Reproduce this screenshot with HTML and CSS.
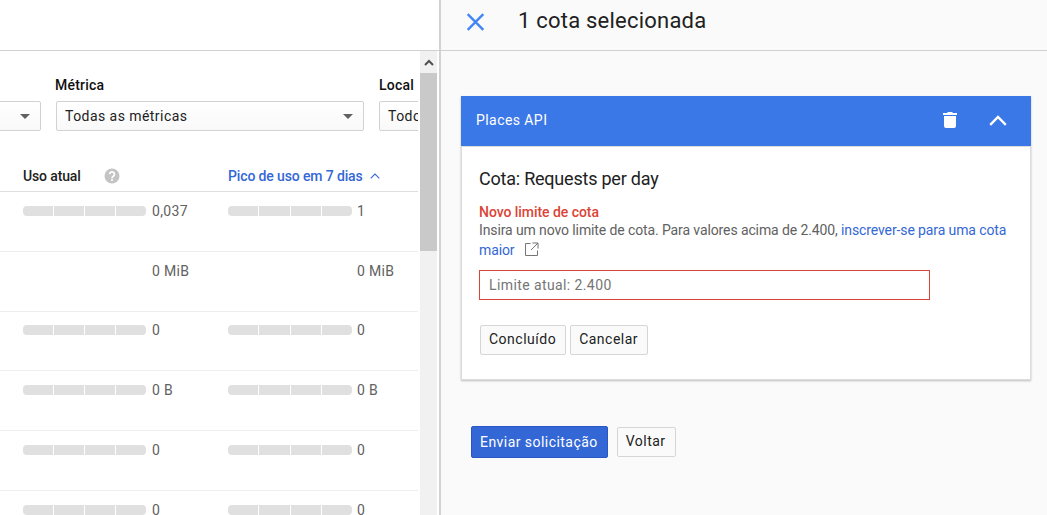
FILE: index.html
```html
<!DOCTYPE html>
<html lang="pt-BR">
<head>
<meta charset="utf-8">
<title>Cotas</title>
<link rel="stylesheet" href="styles.css">
</head>
<body>
<div class="app">
  <section class="left">
    <div class="left-top"></div>
    <div class="left-body">
      <div class="pane">
        <div class="filters">
          <div class="filter f-first">
            <div class="label">&nbsp;</div>
            <div class="select"><span class="sel-text"></span><i class="caret"></i></div>
          </div>
          <div class="filter f-metric">
            <div class="label">Métrica</div>
            <div class="select"><span class="sel-text">Todas as métricas</span><i class="caret"></i></div>
          </div>
          <div class="filter f-local">
            <div class="label">Local</div>
            <div class="select"><span class="sel-text">Todos</span></div>
          </div>
        </div>
        <div class="thead">
          <div class="cell th">Uso atual
            <svg class="help" viewBox="0 0 16 16" width="16" height="16"><circle cx="8" cy="8" r="7.5" fill="#c4c4c4"/><path d="M5.6 6.2a2.4 2.3 0 1 1 3.7 2c-.9.6-1.3 1-1.3 2" fill="none" stroke="#fff" stroke-width="1.7"/><rect x="7.1" y="11" width="1.8" height="1.8" fill="#fff"/></svg>
          </div>
          <div class="cell th th-sort">Pico de uso em 7 dias
            <svg class="sort" viewBox="0 0 10 6" width="10" height="6"><path d="M.7 5.3 5 1l4.3 4.3" fill="none" stroke="#3367d6" stroke-width="1.1"/></svg>
          </div>
        </div>
        <div class="row">
          <div class="cell"><div class="bar"><i></i><i></i><i></i><i></i></div><span class="val">0,037</span></div>
          <div class="cell"><div class="bar b2"><i></i><i></i><i></i><i></i></div><span class="val">1</span></div>
        </div>
        <div class="row">
          <div class="cell"><div class="bar none"></div><span class="val">0 MiB</span></div>
          <div class="cell"><div class="bar b2 none"></div><span class="val">0 MiB</span></div>
        </div>
        <div class="row">
          <div class="cell"><div class="bar"><i></i><i></i><i></i><i></i></div><span class="val">0</span></div>
          <div class="cell"><div class="bar b2"><i></i><i></i><i></i><i></i></div><span class="val">0</span></div>
        </div>
        <div class="row">
          <div class="cell"><div class="bar"><i></i><i></i><i></i><i></i></div><span class="val">0 B</span></div>
          <div class="cell"><div class="bar b2"><i></i><i></i><i></i><i></i></div><span class="val">0 B</span></div>
        </div>
        <div class="row">
          <div class="cell"><div class="bar"><i></i><i></i><i></i><i></i></div><span class="val">0</span></div>
          <div class="cell"><div class="bar b2"><i></i><i></i><i></i><i></i></div><span class="val">0</span></div>
        </div>
        <div class="row">
          <div class="cell"><div class="bar"><i></i><i></i><i></i><i></i></div><span class="val">0</span></div>
          <div class="cell"><div class="bar b2"><i></i><i></i><i></i><i></i></div><span class="val">0</span></div>
        </div>
      </div>
      <div class="scrollbar">
        <div class="sb-btn"><svg viewBox="0 0 10 7" width="10" height="7"><path d="M1 6l4-4 4 4" fill="none" stroke="#505050" stroke-width="2"/></svg></div>
        <div class="sb-thumb"></div>
      </div>
    </div>
  </section>
  <section class="right">
    <header class="right-top">
      <svg class="close" viewBox="0 0 18 18" width="19" height="18"><path d="M1.2 1.2l15.6 15.6M16.8 1.2 1.2 16.8" fill="none" stroke="#4285f4" stroke-width="2.4"/></svg>
      <h1 class="title">1 cota selecionada</h1>
    </header>
    <div class="right-body">
      <div class="card">
        <div class="card-head">
          <span class="card-name">Places API</span>
          <svg class="trash" viewBox="0 0 14 16" width="14" height="16"><path d="M5 0h4l1 1h4v2H0V1h4zM1 4h12v10a2 2 0 0 1-2 2H3a2 2 0 0 1-2-2z" fill="#fff"/></svg>
          <svg class="collapse" viewBox="0 0 18 11" width="18" height="11"><path d="M1.2 9.8 9 2l7.8 7.8" fill="none" stroke="#fff" stroke-width="2.4"/></svg>
        </div>
        <div class="card-body">
          <h2 class="quota">Cota: Requests per day</h2>
          <div class="err">Novo limite de cota</div>
          <p class="help-text">Insira um novo limite de cota. Para valores acima de 2.400, <a class="link">inscrever-se para uma cota maior</a><svg class="ext" viewBox="0 0 14 14" width="14" height="14"><path d="M5.5 1.5H.5v12h12v-5M7.5 1H13v5.5M13 1 6 8" fill="none" stroke="#757575" stroke-width="1"/></svg></p>
          <div class="input">Limite atual: 2.400</div>
          <div class="btns">
            <button class="btn">Concluído</button>
            <button class="btn">Cancelar</button>
          </div>
        </div>
      </div>
      <div class="actions">
        <button class="btn primary">Enviar solicitação</button>
        <button class="btn">Voltar</button>
      </div>
    </div>
  </section>
</div>
</body>
</html>
```
FILE: styles.css
```css
* { box-sizing: border-box; }
html, body { margin: 0; height: 100%; overflow: hidden; }
body { font-family: Roboto, "Liberation Sans", sans-serif; font-size: 14px; color: #212121; background: #fff; }
.app { display: flex; width: 1047px; height: 515px; }

.left { width: 439px; flex: none; display: flex; flex-direction: column; background: #fff; }
.left-top { height: 51px; flex: none; border-bottom: 1px solid #d0d0d0; }
.left-body { flex: 1; display: flex; min-height: 0; }
.pane { width: 420px; flex: none; overflow: hidden; border-right: 2px solid #fff; }

.filters { display: flex; gap: 15px; margin-left: -100px; padding-top: 25px; width: 800px; }
.filter { flex: none; }
.f-first { width: 141px; }
.f-metric { width: 308px; }
.f-local { width: 200px; }
.label { font-weight: 500; font-size: 14px; line-height: 18px; margin-bottom: 7px; letter-spacing: .2px; color: #111; }
.f-metric .label { margin-left: -1px; }
.select { height: 30px; border: 1px solid #d2d2d2; border-radius: 2px; background: linear-gradient(#fff, #f9f9f9); display: flex; align-items: center; justify-content: space-between; padding: 0 10px 0 8px; font-size: 14px; letter-spacing: .45px; color: #212121; }
.caret { width: 0; height: 0; border-left: 5px solid transparent; border-right: 5px solid transparent; border-top: 5px solid #616161; }

.thead { display: flex; height: 61px; padding: 0 0 7px 23px; align-items: flex-end; border-bottom: 1px solid #dedede; }
.cell { width: 205px; flex: none; display: flex; align-items: flex-start; }
.th { font-weight: 500; font-size: 14px; letter-spacing: -.13px; line-height: 16px; color: #212121; align-items: center; }
.help { margin-left: 23px; }
.th-sort { color: #3367d6; width: auto; }
.sort { margin-left: 7px; margin-top: -1px; }

.row { display: flex; height: 59.8px; padding: 9.8px 0 0 23px; border-bottom: 1px solid #eee; }
.bar { width: 123px; height: 10px; margin-top: 4px; display: flex; gap: 1px; border-radius: 4px; overflow: hidden; flex: none; }
.bar.b2 { width: 124px; }
.bar i { flex: 1; background: #e0e0e0; }
.val { margin-left: 6px; font-size: 14px; line-height: 18px; letter-spacing: .35px; color: #616161; }
.b2 + .val { margin-left: 5px; }

.scrollbar { width: 17px; flex: none; background: #f1f1f1; display: flex; flex-direction: column; margin-right: 2px; }
.sb-btn { height: 22px; display: flex; align-items: center; justify-content: center; }
.sb-thumb { height: 178px; background: #c9c9c9; }

.right { flex: 1; background: #fafafa; border-left: 2px solid #d2d2d2; display: flex; flex-direction: column; min-width: 0; }
.right-top { height: 51px; flex: none; border-bottom: 1px solid #d0d0d0; display: flex; align-items: flex-start; }
.close { margin: 13px 0 0 25px; }
.title { margin: 6px 0 0 33px; font-size: 22px; font-weight: 400; line-height: 30px; letter-spacing: .22px; color: #212121; }
.right-body { padding: 45px 16px 0 20px; }
.card { background: #fff; box-shadow: 0 1px 2px rgba(0,0,0,.25); height: 284px; }
.card-head { height: 50px; background: #3b78e7; display: flex; align-items: center; padding: 0 24px 0 15px; color: #fff; }
.card-name { flex: 1; font-size: 14px; letter-spacing: .43px; margin-top: -2px; }
.trash { margin-right: 32px; margin-top: -2px; }
.collapse { margin-top: -1px; }
.card-body { height: 234px; border: 1px solid #dcdcdc; padding: 20px 17px 0; }
.quota { margin: 0; font-size: 18px; font-weight: 400; line-height: 24px; letter-spacing: -.22px; color: #212121; }
.err { margin-top: 13px; font-weight: 500; font-size: 14px; line-height: 16px; letter-spacing: -.05px; color: #db4437; }
.help-text { margin: 0; width: 534px; font-size: 14px; line-height: 20px; letter-spacing: -.11px; color: #616161; }
.link { color: #3367d6; }
.ext { margin-left: 11px; vertical-align: -1px; }
.input { margin-top: 10px; width: 451px; height: 30px; border: 1px solid #db4437; padding: 0 9px; font-size: 14px; line-height: 28px; letter-spacing: .4px; color: #757575; background: #fff; }
.btns { display: flex; gap: 4px; margin: 25px 0 0 1px; }
.btn { height: 30px; padding: 0 9px 2px 8px; font: 400 14px Roboto, "Liberation Sans", sans-serif; letter-spacing: .5px; color: #212121; background: #fafafa; border: 1px solid #d6d6d6; border-radius: 2px; }
.actions { display: flex; align-items: center; gap: 9px; margin: 46px 0 0 10px; }
.primary { height: 32px; padding-bottom: 0; letter-spacing: .45px; color: #fff; background: #3367d6; border-color: #2a56c6; }
```
